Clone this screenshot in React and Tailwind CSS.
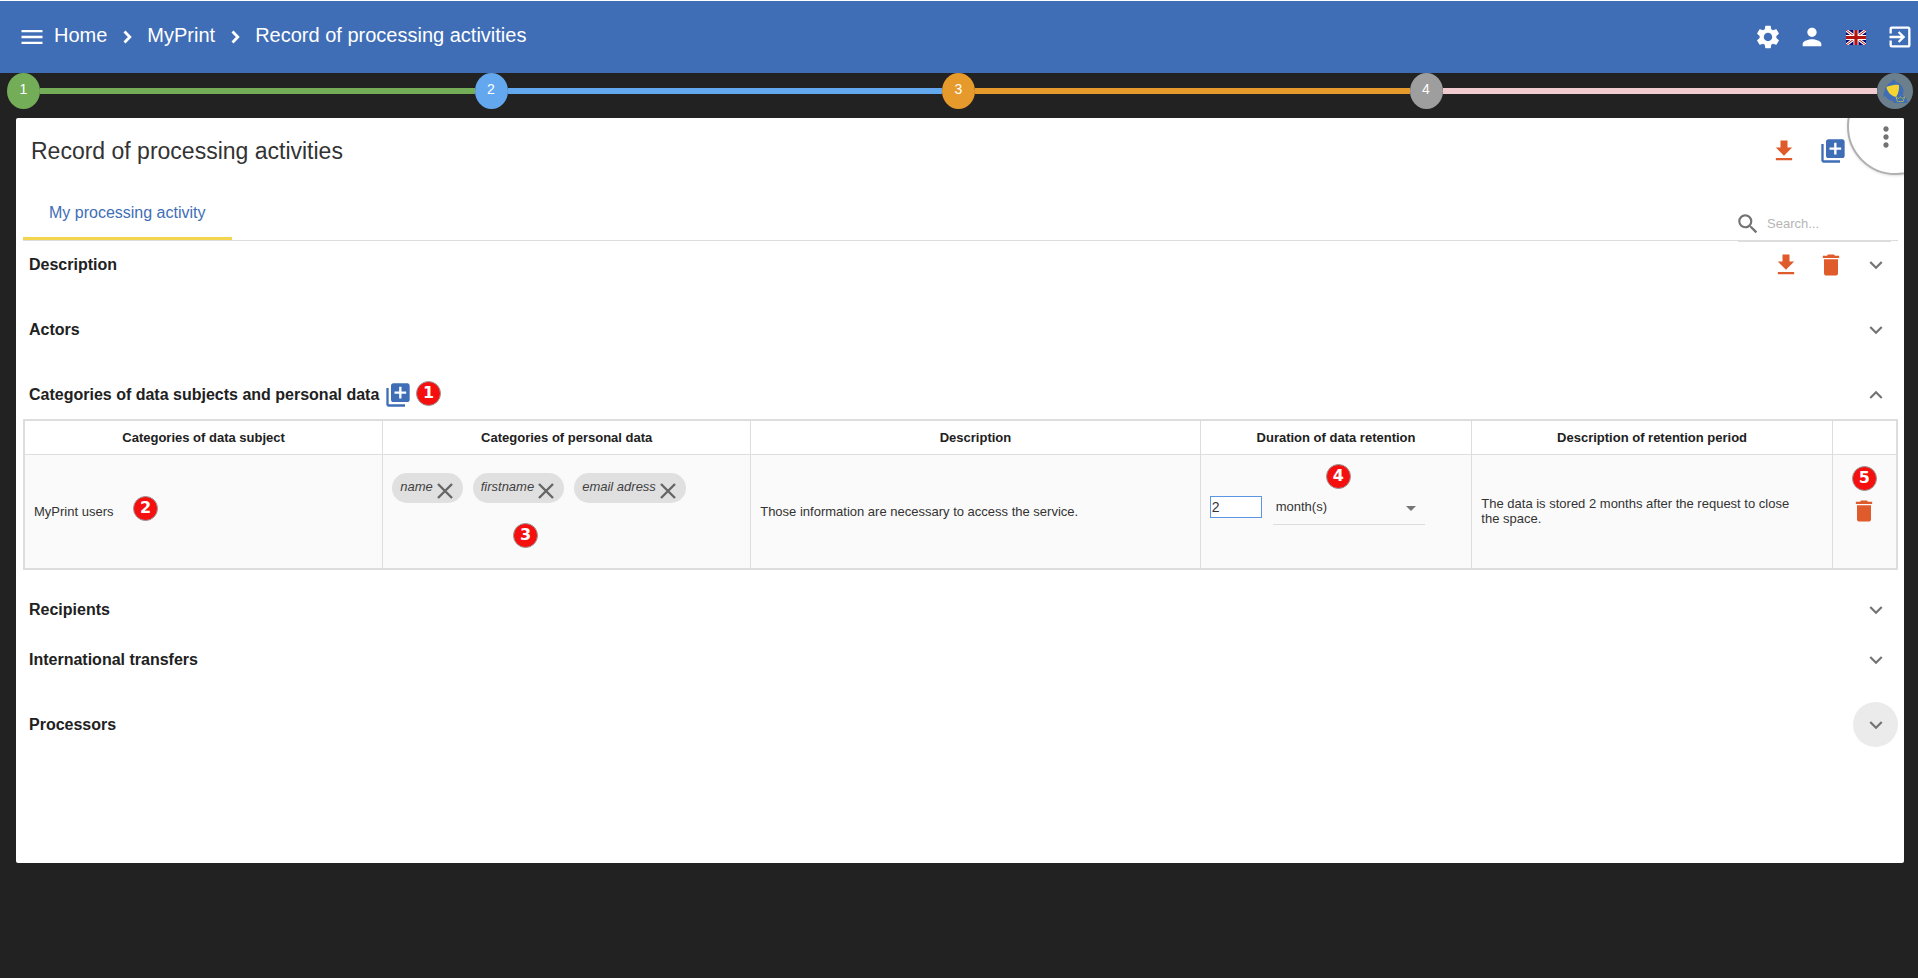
import { useState } from 'react'
import clsx from 'clsx'
import {
  MdMenu,
  MdSettings,
  MdPerson,
  MdExitToApp,
  MdFileDownload,
  MdLibraryAdd,
  MdMoreVert,
  MdSearch,
  MdDelete,
  MdExpandMore,
  MdExpandLess,
} from 'react-icons/md'

const crumbs = ['Home', 'MyPrint', 'Record of processing activities']

const steps = [
  { label: '1', dot: 'bg-[#74ad58]', line: 'bg-[#74ad58]' },
  { label: '2', dot: 'bg-[#63a8ef]', line: 'bg-[#63a8ef]' },
  { label: '3', dot: 'bg-[#e69a2b]', line: 'bg-[#e69a2b]' },
  { label: '4', dot: 'bg-[#9e9e9e]', line: 'bg-[#f0ccd1]' },
]

const columns = [
  { label: 'Categories of data subject', width: 'w-[19.15%]' },
  { label: 'Categories of personal data', width: 'w-[19.65%]' },
  { label: 'Description', width: 'w-[24%]' },
  { label: 'Duration of data retention', width: 'w-[14.5%]' },
  { label: 'Description of retention period', width: 'w-[19.25%]' },
  { label: '', width: 'w-[3.45%]' },
]

function CrumbArrow() {
  return (
    <svg width="24" height="24" viewBox="0 0 24 24" className="mt-1" aria-hidden="true">
      <path d="M9.500 6.500L14.800 12L9.500 17.500" fill="none" stroke="currentColor" strokeWidth="2.800" />
    </svg>
  )
}

function FlagUk() {
  return (
    <svg width="20" height="15" viewBox="0 0 20 15" aria-hidden="true">
      <rect width="20" height="15" fill="#0a0a70" />
      <path d="M0 0L20 15M20 0L0 15" stroke="#fff" strokeWidth="3" />
      <path d="M0 0L20 15M20 0L0 15" stroke="#b3140f" strokeWidth="1" />
      <path d="M10 0V15M0 7.5H20" stroke="#fff" strokeWidth="5" />
      <path d="M10 0V15M0 7.5H20" stroke="#b3140f" strokeWidth="3.2" />
    </svg>
  )
}

function Mascot() {
  return (
    <svg width="36" height="36" viewBox="0 0 36 36" aria-hidden="true">
      <circle cx="18" cy="18" r="18" fill="#6b7f8d" />
      <path
        d="M16.700 6l2.300 3c4.300 1 7.500 4.600 7.500 9.200 0 1.500-.3 2.800-.9 4l3.200 2.300 2.200 5.500H16.800l-.6-2c-3.700-.4-6.700-2.400-8-5.300L6.300 24.300l.8-5.600.8-.9-.3-2.400 1.700-1.600c1-2.200 2.900-4 5.200-4.800z"
        fill="#3f6eb6"
      />
      <path
        d="M9.300 14.800c.4-.8 1-1.200 1.900-1.500 3-1.200 6.300-1.700 9.500-1.600.8 0 1.300.4 1.300 1.200.2 3.400-.6 7-2.300 10-.5.900-1.200 1.100-2.100.8-4-1.200-6.700-4.500-8.300-8.900z"
        fill="#f3d433"
      />
      <path
        d="M19 23.800l2.400 1.700 1.900-1.600 1.900 1.600 2.400-1.700-1.400 4.700h-5.800z"
        fill="none"
        stroke="#b9bf3d"
        strokeWidth="1"
        strokeDasharray="2 0.600"
      />
    </svg>
  )
}

function IconButton({ label, className, children, ...props }) {
  return (
    <button
      type="button"
      aria-label={label}
      className={clsx('flex h-[45px] w-[45px] shrink-0 items-center justify-center rounded-full', className)}
      {...props}
    >
      {children}
    </button>
  )
}

function Marker({ children, className }) {
  return (
    <span
      className={clsx(
        'absolute flex h-[25px] w-[25px] items-center justify-center rounded-full border border-[#999] bg-[#f60f0f] font-["DejaVu_Sans"] text-base leading-none font-bold text-white',
        className
      )}
    >
      {children}
    </span>
  )
}

function Header() {
  return (
    <header className="flex h-[73px] items-center justify-between border-t border-white bg-[#3f6eb6] pr-1 pl-[18px] text-white">
      <div className="flex items-center">
        <button type="button" aria-label="Menu">
          <MdMenu size={28} />
        </button>
        <nav aria-label="Breadcrumb" className="ml-2 flex items-center gap-2 pb-1 text-xl">
          {crumbs.map((crumb, i) => (
            <div key={crumb} className="flex items-center gap-2">
              {i > 0 && <CrumbArrow />}
              <a href="#" className="leading-8">
                {crumb}
              </a>
            </div>
          ))}
        </nav>
      </div>
      <div className="flex items-center gap-4">
        <button type="button" aria-label="Settings">
          <MdSettings size={28} />
        </button>
        <button type="button" aria-label="Account">
          <MdPerson size={28} />
        </button>
        <button type="button" aria-label="Language" className="flex w-7 justify-center">
          <FlagUk />
        </button>
        <button type="button" aria-label="Log out">
          <MdExitToApp size={28} />
        </button>
      </div>
    </header>
  )
}

function Stepper() {
  return (
    <div className="flex items-center pr-[5px] pl-[7px]">
      {steps.map((step) => (
        <div key={step.label} className="flex flex-1 items-center">
          <button
            type="button"
            className={clsx('h-9 w-[33px] rounded-[50%] pb-1 text-sm text-white', step.dot)}
          >
            {step.label}
          </button>
          <div className={clsx('h-1.5 flex-1', step.line)} />
        </div>
      ))}
      <button type="button" aria-label="Assistant">
        <Mascot />
      </button>
    </div>
  )
}

function Section({ title, open, onToggle, actions, extra, active, className, children }) {
  return (
    <section className={className}>
      <div className="flex items-center justify-between pl-1.5">
        <div className="relative flex items-center">
          <h2 className="text-base font-bold">{title}</h2>
          {extra}
        </div>
        <div className="flex">
          {actions}
          <IconButton
            label={`Toggle ${title}`}
            aria-expanded={open}
            onClick={onToggle}
            className={clsx('text-[#737373]', active && 'bg-[#ebebeb]')}
          >
            {open ? <MdExpandLess size={26} /> : <MdExpandMore size={26} />}
          </IconButton>
        </div>
      </div>
      {open && children}
    </section>
  )
}

function Chip({ label, onRemove }) {
  return (
    <li className="flex h-[30px] items-center gap-1 rounded-full bg-[#e0e0e0] pr-2.5 pl-2 text-[#424242] italic">
      <span className="pb-0.5">{label}</span>
      <button type="button" aria-label={`Remove ${label}`} onClick={onRemove} className="mb-1 self-end">
        <svg width="16" height="16" viewBox="0 0 16 16" aria-hidden="true">
          <path d="M1 1L15 15M15 1L1 15" stroke="#666" strokeWidth="2.4" />
        </svg>
      </button>
    </li>
  )
}

function DataTable() {
  const [chips, setChips] = useState(['name', 'firstname', 'email adress'])

  return (
    <table className="mt-0.5 w-full table-fixed border-collapse border-2 border-[#ddd] text-[13px] leading-[15px]">
      <thead>
        <tr className="h-[34px]">
          {columns.map((col) => (
            <th key={col.label} className={clsx('border border-[#ddd] font-bold', col.width)}>
              {col.label}
            </th>
          ))}
        </tr>
      </thead>
      <tbody>
        <tr className="h-[115px] bg-[#fafafa] text-[#333]">
          <td className="relative border border-[#ddd] px-[9px]">
            MyPrint users
            <Marker className="top-[41px] left-[108px]">2</Marker>
          </td>
          <td className="relative border border-[#ddd] px-[9px] pt-[18px] align-top">
            <ul className="flex flex-wrap gap-2.5">
              {chips.map((chip) => (
                <Chip key={chip} label={chip} onRemove={() => setChips(chips.filter((c) => c !== chip))} />
              ))}
            </ul>
            <Marker className="top-[68px] left-[130px]">3</Marker>
          </td>
          <td className="border border-[#ddd] px-[9px]">Those information are necessary to access the service.</td>
          <td className="relative border border-[#ddd] px-[9px] pb-2">
            <div className="flex items-center gap-[11px]">
              <input
                aria-label="Duration"
                defaultValue="2"
                className="h-[22px] w-[52px] border border-[#5a96e3] bg-white px-px text-sm text-[#333] outline-none"
              />
              <div className="relative w-[152px]">
                <select
                  aria-label="Duration unit"
                  defaultValue="month(s)"
                  className="h-[35px] w-full appearance-none border-b border-[#ddd] bg-transparent px-[3px] outline-none"
                >
                  <option>day(s)</option>
                  <option>month(s)</option>
                  <option>year(s)</option>
                </select>
                <svg
                  width="10"
                  height="5"
                  viewBox="0 0 10 5"
                  className="pointer-events-none absolute top-4 right-[9px]"
                  aria-hidden="true"
                >
                  <path d="M0 0H10L5 5z" fill="#757575" />
                </svg>
              </div>
            </div>
            <Marker className="top-[9px] left-[125px]">4</Marker>
          </td>
          <td className="border border-[#ddd] pr-8 pl-[9px]">
            The data is stored 2 months after the request to close the space.
          </td>
          <td className="relative border border-[#ddd]">
            <button type="button" aria-label="Delete row" className="mx-auto block text-[#df5b2c]">
              <MdDelete size={28} />
            </button>
            <Marker className="top-[11px] left-[19px]">5</Marker>
          </td>
        </tr>
      </tbody>
    </table>
  )
}

export default function App() {
  const [open, setOpen] = useState('categories')
  const toggle = (name) => ({
    open: open === name,
    onToggle: () => setOpen(open === name ? null : name),
  })

  return (
    <div className='min-h-screen bg-[#222] font-["Liberation_Sans",Arial,sans-serif] text-[#212121]'>
      <Header />
      <Stepper />

      <main className="relative mr-3.5 ml-4 mt-[9px] overflow-hidden rounded-xs bg-white pr-1.5 pb-[116px] pl-[7px]">
        <div className="absolute -top-10 -right-10 h-[97px] w-[97px] rounded-full border-2 border-[#b0b0b0] bg-white shadow" />
        <button type="button" aria-label="More" className="absolute top-[3px] right-0.5 text-[#737373]">
          <MdMoreVert size={32} />
        </button>

        <div className="flex h-[66px] items-center justify-between pr-[43px] pl-2">
          <h1 className="text-[23px] text-[#333]">Record of processing activities</h1>
          <div className="flex gap-1">
            <IconButton label="Download record" className="text-[#df5b2c]">
              <MdFileDownload size={28} />
            </IconButton>
            <IconButton label="Add record" className="text-[#3f6eb6]">
              <MdLibraryAdd size={28} />
            </IconButton>
          </div>
        </div>

        <div className="flex h-[57px] justify-between border-b border-[#ddd]">
          <div role="tablist" className="flex">
            <button
              type="button"
              role="tab"
              aria-selected="true"
              className="border-b-3 border-[#f3d54e] px-[26px] pt-1 text-base text-[#3f6eb6]"
            >
              My processing activity
            </button>
          </div>
          <label className="mr-[7px] -mb-0.5 flex h-[42px] w-[153px] items-center gap-1.5 self-end border-b border-[#ddd] pt-1.5">
            <MdSearch size={26} className="-ml-[3px] shrink-0 text-[#737373]" />
            <input
              type="text"
              aria-label="Search"
              placeholder="Search..."
              className="w-full min-w-0 text-[13px] outline-none placeholder:text-[#b5b5b5]"
            />
          </label>
        </div>

        <Section
          title="Description"
          {...toggle('description')}
          className="mt-px"
          actions={
            <>
              <IconButton label="Download" className="text-[#df5b2c]">
                <MdFileDownload size={28} />
              </IconButton>
              <IconButton label="Delete" className="text-[#df5b2c]">
                <MdDelete size={28} />
              </IconButton>
            </>
          }
        />
        <Section title="Actors" {...toggle('actors')} className="mt-5" />
        <Section
          title="Categories of data subjects and personal data"
          {...toggle('categories')}
          className="mt-5"
          extra={
            <>
              <button type="button" aria-label="Add category" className="ml-[5px] text-[#3f6eb6]">
                <MdLibraryAdd size={28} />
              </button>
              <Marker className="top-0 left-[387px]">1</Marker>
            </>
          }
        >
          <DataTable />
        </Section>
        <Section title="Recipients" {...toggle('recipients')} className="mt-[17px]" />
        <Section title="International transfers" {...toggle('transfers')} className="mt-[5px]" />
        <Section title="Processors" {...toggle('processors')} className="mt-5" active />
      </main>
    </div>
  )
}
